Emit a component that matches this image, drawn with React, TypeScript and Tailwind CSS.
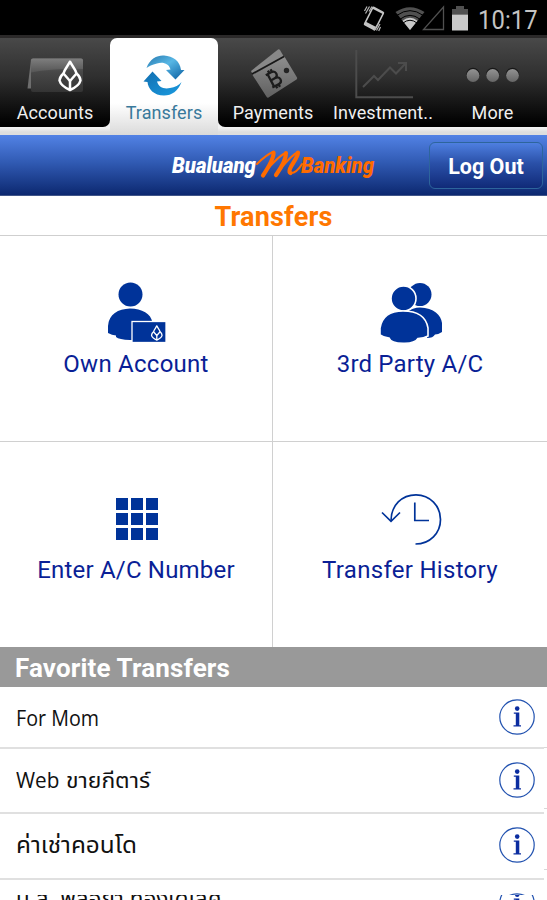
import type { ReactNode } from "react";

const NAVY = "#003399";

function Lotus({ color, width }: { color: string; width: number }) {
  return (
    <g fill="none" stroke={color} strokeWidth={width} strokeLinejoin="round">
      <path d="M12 1.200C9.500 6 6.500 8.500 5.500 13L12 20.500L18.500 13C17.500 8.500 14.500 6 12 1.200Z" />
      <path d="M5.500 13C3.800 14.400 1.700 16.500 1.500 20C2.500 24 7.500 27.500 12 29.500C16.500 27.500 21.500 24 22.500 20C22.300 16.500 20.200 14.400 18.500 13M12 20.500V29.500" />
    </g>
  );
}

function StatusBar() {
  return (
    <div className="flex h-[35px] shrink-0 justify-end bg-black">
      <svg width="110" height="35" viewBox="360 0 110 35">
        <g transform="translate(374 18.500) rotate(27)">
          <path
            fillRule="evenodd"
            fill="#c4c4c4"
            d="M-5-10.500h10q1.800 0 1.800 1.800v17.400q0 1.800-1.800 1.800h-10q-1.800 0-1.800-1.800v-17.400q0-1.800 1.800-1.800ZM-5.200-8V6.500H5.200V-8Z"
          />
        </g>
        <g stroke="#b5b5b5" strokeWidth="1.200" fill="none">
          <path d="M369.500 6.500l-4 7M372 6.500l-3 5M367 6.500l-2.500 4.500M380 24l-3.500 6.500M378 24l-4 6.500M380.500 27l-1.800 4" />
        </g>
        <path d="M410 30L395.500 12Q410 2.500 424.500 12Z" fill="#505050" />
        <path d="M410 30L402.500 20.800Q410 14.500 417.500 20.800Z" fill="#c8c8c8" />
        <g fill="none" stroke="#000" strokeWidth="1">
          <path d="M397 15.300Q410 6 423 15.300M400 19.200Q410 11.500 420 19.200M403 23Q410 17.500 417 23" />
        </g>
        <path d="M443.500 7v22.500h-20Z" fill="none" stroke="#505050" strokeWidth="1.300" />
        <path d="M452 9h4V6h8v3h4v5.500h-16Z" fill="#505050" />
        <path d="M452 14.500h16V30.500h-16Z" fill="#c8c8c8" />
      </svg>
      <div className="w-[77px] pl-2 text-[25px] leading-[41px] tracking-[0.1px] text-[#c4c4c4]">
        <span className="inline-block origin-left scale-x-[0.95]">10:17</span>
      </div>
    </div>
  );
}

function AccountsIcon() {
  return (
    <svg width="60" height="44" viewBox="25 51 60 44">
      <defs>
        <linearGradient id="card" x1="0" y1="0" x2="0" y2="1">
          <stop offset="0" stopColor="#6a6a6a" />
          <stop offset="0.400" stopColor="#484848" />
          <stop offset="1" stopColor="#343434" />
        </linearGradient>
        <linearGradient id="gloss" x1="0" y1="0" x2="0" y2="1">
          <stop offset="0" stopColor="#858585" />
          <stop offset="1" stopColor="#5a5a5a" />
        </linearGradient>
      </defs>
      <path d="M31 57.500l-3.500 29h4.500V57.500Z" fill="#6d6d6d" />
      <rect x="31" y="56.500" width="52" height="33.500" rx="2" fill="url(#card)" />
      <path d="M31 70.500V58.500q0-2 2-2h48q2 0 2 2V67Q55 66 31 70.500Z" fill="url(#gloss)" opacity=".75" />
      <g transform="translate(58 58.500)">
        <Lotus color="#fff" width={2.5} />
      </g>
    </svg>
  );
}

function TransfersIcon() {
  return (
    <svg width="46" height="46" viewBox="141 52 46 46">
      <defs>
        <linearGradient id="blueTop" x1="0" y1="0" x2="1" y2="1">
          <stop offset="0" stopColor="#2577ad" />
          <stop offset=".45" stopColor="#58b7e5" />
          <stop offset="1" stopColor="#075c9f" />
        </linearGradient>
        <linearGradient id="blueBottom" x1="0" y1="0" x2="1" y2="1">
          <stop offset="0" stopColor="#126eb0" />
          <stop offset="1" stopColor="#1a9be0" />
        </linearGradient>
      </defs>
      <path d="M146.500 68C150 58 158 55 164 55.500C173 56 180 61 181 70L184.500 70L175.500 79.500L166 70L170.500 69.500C169 63 162 61.500 157 63.500C152 65 149 66 146.500 68Z" fill="url(#blueTop)" />
      <path d="M143.500 81.500L152.500 71.500L161.500 81L157 81.500C158.500 87 164 89.500 170 88C175 87 179 85.500 181.500 82C178 91 172 95.500 164 95.500C154 95.500 148 89 147.500 82Z" fill="url(#blueBottom)" />
    </svg>
  );
}

function PaymentsIcon() {
  return (
    <svg width="50" height="52" viewBox="248 48 50 52">
      <defs>
        <linearGradient id="ticket" x1="0" y1="0" x2="0" y2="1">
          <stop offset="0" stopColor="#8e8e8e" />
          <stop offset="1" stopColor="#606060" />
        </linearGradient>
      </defs>
      <path d="M251 70l27-21.500q1-.7 2 .5l4 7L253 74Z" fill="#888" />
      <path d="M252.500 74L283.500 56q1-.5 1.500.5l12 20q.5 1-.5 2l-28 18q-1 .7-1.800-.5Z" fill="url(#ticket)" />
      <path d="M252 73l32-17.500" stroke="#181818" strokeWidth="1.800" />
      <circle cx="286.500" cy="69.500" r="2.700" fill="#242424" />
      <g transform="translate(273.500 78) rotate(-28)" fill="none" stroke="#1c1c1c" strokeWidth="2.300">
        <path d="M-5-7H1Q5-7 5-3.500T1 0H-3H2Q6 0 6 3.500T2 7H-5M-3-7V7M-1-10V-7M-1 7V10M2-10V-7M2 7V10" />
      </g>
    </svg>
  );
}

function InvestIcon() {
  return (
    <svg width="60" height="52" viewBox="353 49 60 52" fill="none" stroke="#4c4c4c" strokeWidth="2">
      <path d="M356.300 50V97.300H413" />
      <path d="M363 87l11-11 4 4 12-12.500 6 6L406 63M398 63h8v8" />
    </svg>
  );
}

function MoreIcon() {
  return (
    <svg width="56" height="18" viewBox="465 66 56 18">
      <defs>
        <linearGradient id="dot" x1="0" y1="0" x2="0" y2="1">
          <stop offset="0" stopColor="#929292" />
          <stop offset="1" stopColor="#666" />
        </linearGradient>
      </defs>
      {[473, 492.7, 512.5].map((x) => (
        <g key={x}>
          <circle cx={x} cy="74.500" r="6.700" fill="#171717" />
          <circle cx={x} cy="75.500" r="6.400" fill="url(#dot)" />
        </g>
      ))}
    </svg>
  );
}

function Tab({ icon, label, look }: { icon: ReactNode; label: string; look: string }) {
  return (
    <div className={`flex min-w-0 flex-col items-center ${look}`}>
      <div className="flex h-[63px] shrink-0 items-center justify-center pt-[11px]">{icon}</div>
      <span className="text-[18px] leading-[24px] tracking-[0.100px] whitespace-nowrap">{label}</span>
    </div>
  );
}

const DARK_TAB = "h-[89px] bg-[linear-gradient(#494949,#2e2e2e_45%,#000_97%)]";

function TabBar() {
  return (
    <div className="h-[100px] shrink-0 border-t-[3px] border-[#2b2929] bg-[linear-gradient(#494949_0px,#494949_30px,#f2f2f2_31px,#f2f2f2_90px,#dedede_94px)]">
      <div className="grid h-[97px] grid-cols-[110px_108px_110px_110px_109px] text-[#f0f0f0]">
        <Tab icon={<AccountsIcon />} label="Accounts" look={`rounded-br-[7px] ${DARK_TAB}`} />
        <Tab
          icon={<TransfersIcon />}
          label="Transfers"
          look="h-[97px] rounded-t-[7px] bg-[linear-gradient(#fff_0px,#fff_65px,#dadada_97px)] text-[#38799b]"
        />
        <Tab icon={<PaymentsIcon />} label="Payments" look={`rounded-bl-[7px] ${DARK_TAB}`} />
        <Tab icon={<InvestIcon />} label="Investment.." look={DARK_TAB} />
        <Tab icon={<MoreIcon />} label="More" look={DARK_TAB} />
      </div>
    </div>
  );
}

function Header() {
  return (
    <div className="flex h-[61px] shrink-0 items-center justify-end border-b border-[#405589] bg-[linear-gradient(#5282e5,#315bb4_45%,#0c2870)] pr-[4px]">
      <svg width="208" height="36" viewBox="170 147 208 36" className="mr-[51px]">
        <g fontFamily="Roboto, sans-serif" fontWeight="900" fontStyle="italic" fontSize="21.500">
          <text x="172" y="173" textLength="84" lengthAdjust="spacingAndGlyphs" fill="#fff">
            Bualuang
          </text>
          <text x="301" y="173" textLength="73" lengthAdjust="spacingAndGlyphs" fill="#ff6b00">
            Banking
          </text>
        </g>
        <g fill="none" stroke="#ff6b00" strokeLinecap="round" strokeLinejoin="round">
          <path d="M257 164C263 158 268 154 273 152M264 173C270 166 279 156 286 152.500M277 173C283 166 291 155 298 152M291 173C295 173 299 169 302 164" strokeWidth="2" />
          <path d="M273.500 152.500C274 158 268 168 263 175.500M286 153C286 159 281 168 276 175M298 152.500C298 159 286 170 290.500 173" strokeWidth="4.200" />
        </g>
      </svg>
      <button className="h-[47px] w-[114px] rounded-[6px] border border-[#2d659c] bg-[linear-gradient(#4e7fe0,#2a50a8_45%,#102a78)] pt-px text-center text-[21.500px] leading-[46px] font-bold text-white">
        Log Out
      </button>
    </div>
  );
}

function Tile({ icon, label, fit }: { icon: ReactNode; label: string; fit: string }) {
  return (
    <div className="flex flex-col items-center bg-white pt-[43px]">
      <div className="flex h-[68px] items-center">{icon}</div>
      <span className={`text-[24px] leading-[34px] whitespace-nowrap text-[#0a1f96] ${fit}`}>{label}</span>
    </div>
  );
}

function OwnIcon() {
  return (
    <svg width="64" height="68" viewBox="104 279 64 68">
      <circle cx="130.500" cy="294.500" r="12" fill={NAVY} />
      <path d="M108 333V326C109 314 118 309 130 308.500C142 309 151 313 152.500 323V340H130Q119 339.500 116 337L116 335.500Q112 335 108 333Z" fill={NAVY} />
      <rect x="132" y="321.500" width="34" height="21" fill={NAVY} stroke="#fff" strokeWidth="1.300" />
      <g transform="translate(150.800 325.300) scale(.5)">
        <Lotus color="#fff" width={2.6} />
      </g>
    </svg>
  );
}

function PartyIcon() {
  return (
    <svg width="66" height="68" viewBox="377 279 66 68" fill={NAVY}>
      <circle cx="420" cy="294.500" r="11.500" />
      <path d="M406 312Q413 307.500 420 307.500C434 308 441 315 442 323V332Q438 334.500 435 334.500Q433 338 427 338V325Z" />
      <g stroke="#fff" strokeWidth="1.600">
        <circle cx="403.500" cy="298.500" r="12.500" />
        <path d="M380 335V328C382 316 390 311 403 311C417 311 426 316 428 328V336Q424 338.500 418 338.500Q415 343.500 404 343.300Q391 343.500 389 338Q384 338 380 335Z" />
      </g>
    </svg>
  );
}

function KeypadIcon() {
  return (
    <div className="ml-px grid grid-cols-3 gap-[3px]">
      {Array.from({ length: 9 }, (_, i) => (
        <div key={i} className="size-[12px] bg-[#003399]" />
      ))}
    </div>
  );
}

function HistoryIcon() {
  return (
    <svg width="64" height="60" viewBox="378 490 64 60" fill="none" stroke={NAVY} strokeWidth="1.700" className="mt-px">
      <path d="M391 521C391 505 402 494.800 416 494.800C430 494.800 440.500 506 440.500 519.500C440.500 533 430 544 415.500 544" />
      <path d="M382 512.500L391 521.300L400 512.500M414.800 502.500V520.500H429" />
    </svg>
  );
}

function InfoIcon({ place }: { place: string }) {
  return (
    <svg width="36" height="36" viewBox="0 0 36 36" className={`shrink-0 ${place}`}>
      <circle cx="18" cy="18" r="17.200" fill="none" stroke="#2353b0" strokeWidth="1.200" />
      <circle cx="18.200" cy="9.600" r="2.300" fill="#0b2da0" />
      <path d="M14.800 13.500h5.500V26.300h1.700v1.200h-7.500v-1.200h2.300V14.800h-2Z" fill="#0b2da0" />
    </svg>
  );
}

function Favorite({ children, size }: { children: ReactNode; size: string }) {
  return (
    <div className={`flex shrink-0 items-center justify-between border-b-2 border-[#e0e0e0] pr-[9px] pl-[16px] ${size}`}>
      <span className="text-[22px] whitespace-nowrap text-[#111]">{children}</span>
      <InfoIcon place="" />
    </div>
  );
}

export default function App() {
  return (
    <main className="flex h-[900px] w-[547px] flex-col overflow-hidden bg-white font-[Roboto,'Noto_Sans',sans-serif]">
      <StatusBar />
      <TabBar />
      <Header />
      <h1 className="h-[40px] shrink-0 border-b border-[#cfcfcf] text-center text-[27px] leading-[42px] font-bold tracking-[0.200px] text-[#ff7700]">
        Transfers
      </h1>
      <div className="grid h-[411px] shrink-0 grid-cols-[272px_274px] grid-rows-[205px_205px] gap-px bg-[#d0d0d0]">
        <Tile icon={<OwnIcon />} label="Own Account" fit="tracking-[0.250px]" />
        <Tile icon={<PartyIcon />} label="3rd Party A/C" fit="tracking-[0.200px]" />
        <Tile icon={<KeypadIcon />} label="Enter A/C Number" fit="tracking-[0.200px]" />
        <Tile icon={<HistoryIcon />} label="Transfer History" fit="tracking-[0.300px]" />
      </div>
      <h2 className="h-[40px] shrink-0 bg-[#999] pl-[15px] text-[26px] leading-[43px] font-bold tracking-[0.150px] text-white">
        Favorite Transfers
      </h2>
      <div className="flex min-h-0 grow overflow-hidden font-['Open_Sans','Noto_Sans_Thai','Noto_Sans',sans-serif]">
        <div className="flex w-[544px] flex-col">
          <Favorite size="h-[62px]">
            <span className="inline-block origin-left scale-x-[0.895]">For Mom</span>
          </Favorite>
          <Favorite size="h-[65px] pb-[2px]">
            <span className="inline-block w-[50px] origin-left scale-x-[0.94]">Web</span>
            <span className="inline-block origin-left scale-x-[1.040]">ขายกีตาร์</span>
          </Favorite>
          <Favorite size="h-[66px] pb-[2px]">
            <span className="inline-block origin-left scale-x-[1.080] text-[22.500px]">ค่าเช่าคอนโด</span>
          </Favorite>
          <div className="flex h-[15px] shrink-0 items-start justify-end overflow-hidden pr-[9px]">
            <InfoIcon place="mt-[13px]" />
          </div>
          <div className="flex h-[5px] shrink-0 items-start justify-between overflow-hidden pr-[9px] pl-[16px]">
            <span className="-mt-[14px] inline-block origin-left scale-x-[1.020] text-[22px] leading-[32px] whitespace-nowrap text-[#111]">
              น.ส. พลอยา ทองใดเลิศ
            </span>
            <InfoIcon place="-mt-[10px]" />
          </div>
        </div>
        <div className="flex w-[3px] flex-col">
          <div className="h-[61px] shrink-0 border-b border-[#d8d8d8]" />
          <div className="h-[61px] shrink-0 border-b border-[#d8d8d8]" />
          <div className="h-[61px] shrink-0 border-b border-[#d8d8d8]" />
        </div>
      </div>
    </main>
  );
}
